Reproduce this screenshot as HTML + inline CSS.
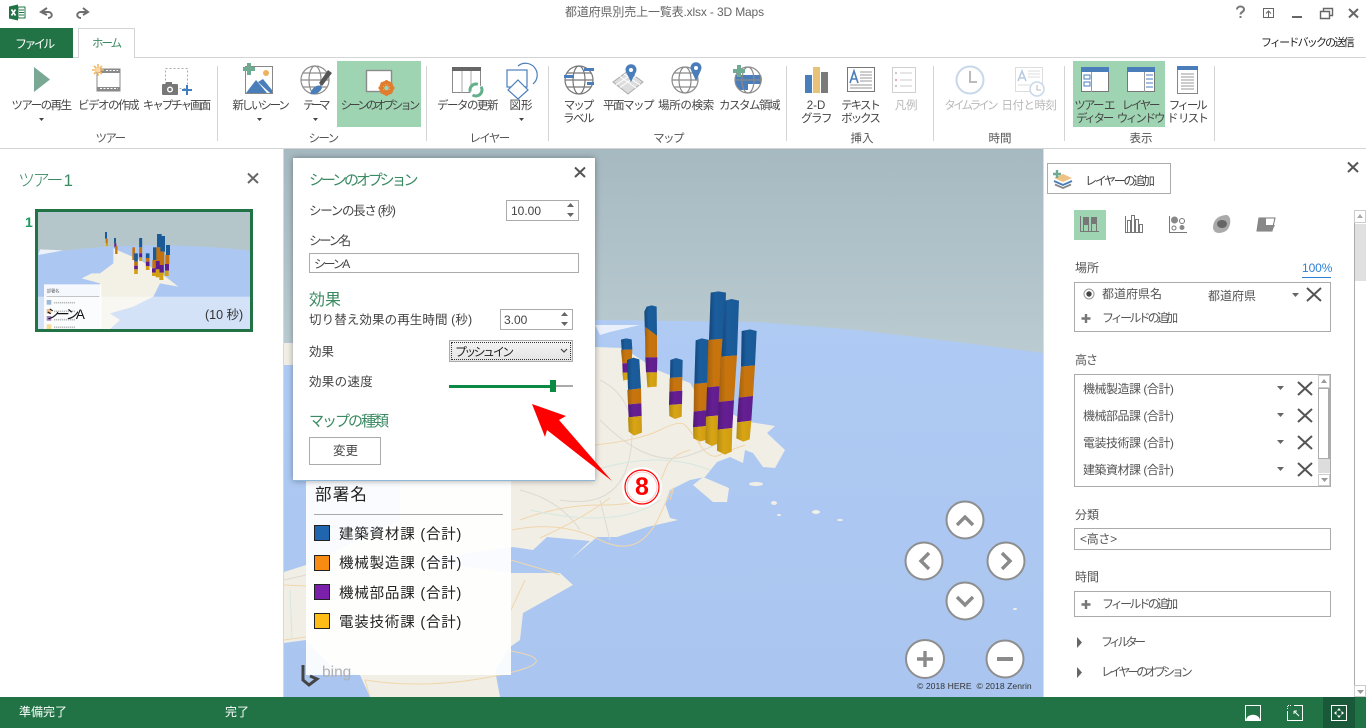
<!DOCTYPE html>
<html lang="ja">
<head>
<meta charset="utf-8">
<title>3D Maps</title>
<style>
html,body{margin:0;padding:0}
body{width:1366px;height:728px;overflow:hidden;position:relative;background:#fff;font-family:"Liberation Sans","Noto Sans CJK JP",sans-serif;color:#444}
.t{position:absolute;white-space:nowrap;line-height:1.2}
.r{font-size:11.5px;color:#444;width:120px;text-align:center;letter-spacing:-1.3px}
.g{font-size:11.5px;color:#555;width:80px;text-align:center;letter-spacing:-1px}
.dis{color:#b8b8b8}
.sep{position:absolute;top:66px;width:1px;height:75px;background:#d4d4d4}
.b{position:absolute;box-sizing:border-box;background:#fff;border:1px solid #ababab}
.hl{position:absolute;background:#9fd4b3}
.d{font-size:12.5px;color:#444;letter-spacing:-.6px}
.h{font-size:15px;color:#3a8a62;letter-spacing:-.6px}
.p{font-size:12px;color:#555;letter-spacing:-.5px}
.l{font-size:14.5px;color:#222;letter-spacing:.8px}
.sw{position:absolute;left:314px;width:16px;height:16px;box-sizing:border-box;border:1px solid #222}
svg{position:absolute;left:0;top:0}
</style>
</head>
<body>
<!-- MAP -->
<svg width="1366" height="728" viewBox="0 0 1366 728">
<defs>
<linearGradient id="sea" x1="0" y1="0" x2="0" y2="1"><stop offset="0" stop-color="#bcd8ff"/><stop offset=".3" stop-color="#afcbf4"/><stop offset="1" stop-color="#aac6f0"/></linearGradient>
<linearGradient id="sky" x1="0" y1="0" x2="0" y2="1"><stop offset="0" stop-color="#a6b9c1"/><stop offset="1" stop-color="#bacbd1"/></linearGradient>
<linearGradient id="bl" x1="0" y1="0" x2="1" y2="0"><stop offset="0" stop-color="#134679"/><stop offset=".35" stop-color="#1b5c9c"/><stop offset="1" stop-color="#1a5a97"/></linearGradient>
<linearGradient id="or" x1="0" y1="0" x2="1" y2="0"><stop offset="0" stop-color="#a4610f"/><stop offset=".4" stop-color="#c8750e"/><stop offset="1" stop-color="#c4720e"/></linearGradient>
<linearGradient id="pu" x1="0" y1="0" x2="1" y2="0"><stop offset="0" stop-color="#4e1a76"/><stop offset=".4" stop-color="#651f93"/><stop offset="1" stop-color="#5f1d8c"/></linearGradient>
<linearGradient id="ye" x1="0" y1="0" x2="1" y2="0"><stop offset="0" stop-color="#b48b12"/><stop offset=".45" stop-color="#d8a514"/><stop offset="1" stop-color="#cf9c12"/></linearGradient>
</defs>
<rect x="284" y="148" width="760" height="549" fill="url(#sea)"/>
<path d="M284 148H1043V353L957 342 857 330 757 322 595 320 284 343Z" fill="url(#sky)"/>
<rect x="283" y="148" width="1" height="549" fill="#d8d8d8"/>
<path d="M284 343H440V365H284Z" fill="#f1eee5"/>
<path d="M595 325L640 325 610 332 600 335Z" fill="#e9f0fb"/>
<path d="M595 347L623 348 657 370 690 383 700 400 750 422 775 426 767 433 785 450 775 468 763 467 753 453 745 450 743 463 730 457 717 462 705 477 690 480 670 490 665 503 670 518 678 520 647 527 617 537 597 537 570 560 590 541 547 537 533 550 513 547 420 560 511 573 560 573 573 585 523 613 520 640 510 647 495 670 500 697 370 697 360 675 330 665 306 640 284 643 284 572 306 565 400 520 400 400 480 340Z" fill="#f1eee5"/>
<path d="M693 485L703 477 729 488 727 502 713 502Z" fill="#f1eee5"/>
<g fill="#f1eee5"><ellipse cx="756" cy="484" rx="7" ry="2"/><ellipse cx="774" cy="503" rx="3" ry="2"/><ellipse cx="816" cy="512" rx="4" ry="2"/><ellipse cx="840" cy="520" rx="3" ry="1"/><ellipse cx="779" cy="515" rx="2" ry="1"/><ellipse cx="1015" cy="609" rx="2" ry="1"/></g>
<g fill="none" stroke="#f0d6ac" stroke-width="1">
<path d="M595 445Q640 440 660 430T685 425 700 445 720 455 745 445"/><path d="M520 520Q560 505 600 505T650 495 665 470 690 450"/>
<path d="M512 530Q560 520 600 540T660 515 670 500"/><path d="M284 585L306 586"/><path d="M284 640L306 637"/>
<path d="M511 560L545 570 560 575"/><path d="M540 538Q580 520 610 498"/><path d="M370 697L365 680Q430 690 500 675T505 650"/>
<path d="M700 400L695 420 700 445"/><path d="M511 610L525 580"/>
</g>
<g fill="none" stroke="#dcdad2" stroke-width="1">
<path d="M600 380Q640 400 630 455T560 500"/><path d="M600 420Q650 470 690 455T720 440"/><path d="M520 490Q560 500 580 530"/><path d="M600 500L610 540"/><path d="M284 580L306 575"/>
</g>
<g fill="none" stroke="#d6e8e0" stroke-width="1"><path d="M595 470Q660 450 710 470"/><path d="M530 510Q620 530 660 500"/><path d="M290 590L292 640"/></g>
<!-- bars -->
<g transform="translate(590 280) scale(.33333)">
<polygon fill="url(#bl)" points="93,179 108,175 125,178 127,208 95,210"/><polygon fill="url(#or)" points="93,210 127,208 125,248 97,250"/><polygon fill="url(#pu)" points="97,250 115,249 115,278 98,278"/><polygon fill="url(#ye)" points="97,278 115,278 115,298 100,302"/>
<polygon fill="url(#bl)" points="163,95 170,80 185,76 200,80 201,167 165,167"/><polygon fill="url(#or)" points="165,140 201,167 201,232 166,232"/><polygon fill="url(#pu)" points="166,232 202,232 201,277 168,277"/><polygon fill="url(#ye)" points="169,277 201,277 200,320 172,322"/>
<polygon fill="url(#bl)" points="111,240 130,233 148,238 153,325 114,330"/><polygon fill="url(#or)" points="112,330 153,325 154,370 114,373"/><polygon fill="url(#pu)" points="114,373 154,370 155,408 116,412"/><polygon fill="url(#ye)" points="114,412 155,408 156,458 132,467 116,455"/>
<polygon fill="url(#bl)" points="241,240 258,234 278,240 277,291 240,294"/><polygon fill="url(#or)" points="239,294 277,291 276,332 238,335"/><polygon fill="url(#pu)" points="238,335 277,332 276,372 237,375"/><polygon fill="url(#ye)" points="237,375 276,372 275,410 255,417 238,408"/>
<polygon fill="url(#bl)" points="317,181 335,175 358,180 355,308 313,312"/><polygon fill="url(#or)" points="312,312 355,308 352,390 311,395"/><polygon fill="url(#pu)" points="311,395 352,390 350,438 309,442"/><polygon fill="url(#ye)" points="309,442 350,438 348,480 330,484 310,475"/>
<polygon fill="url(#bl)" points="455,153 480,148 500,153 495,256 453,260"/><polygon fill="url(#or)" points="453,260 495,256 489,348 446,353"/><polygon fill="url(#pu)" points="446,353 489,348 484,422 441,427"/><polygon fill="url(#ye)" points="441,427 484,422 479,478 460,485 439,475"/>
<polygon fill="url(#bl)" points="362,38 385,34 408,38 404,176 357,180"/><polygon fill="url(#or)" points="355,180 404,176 394,318 351,322"/><polygon fill="url(#pu)" points="351,322 394,318 388,406 348,410"/><polygon fill="url(#ye)" points="348,410 388,406 385,490 365,498 346,488"/>
<polygon fill="url(#bl)" points="405,62 425,57 447,62 441,226 394,230"/><polygon fill="url(#or)" points="392,230 441,226 432,361 386,366"/><polygon fill="url(#pu)" points="386,366 432,361 427,444 383,449"/><polygon fill="url(#ye)" points="382,449 427,444 425,515 405,524 381,512"/>
</g>
</svg>

<!-- Legend -->
<div style="position:absolute;left:306px;top:481px;width:205px;height:194px;background:rgba(255,255,255,.92)"></div>
<div class="t" style="left:315px;top:486px;font-size:16.5px;color:#222;letter-spacing:1.2px">部署名</div>
<div style="position:absolute;left:314px;top:514px;width:189px;height:1px;background:#a8a8a8"></div>
<div class="sw" style="top:525px;background:#1f66ae"></div><div class="t l" style="left:339px;top:527px">建築資材課 (合計)</div>
<div class="sw" style="top:555px;background:#f88c12"></div><div class="t l" style="left:339px;top:556px">機械製造課 (合計)</div>
<div class="sw" style="top:584px;background:#7a20ab"></div><div class="t l" style="left:339px;top:586px">機械部品課 (合計)</div>
<div class="sw" style="top:613px;background:#fdbd16"></div><div class="t l" style="left:339px;top:615px">電装技術課 (合計)</div>
<svg width="1366" height="728"><path d="M303 665V680L309 685 317 679 310 676" fill="none" stroke="#444" stroke-width="3"/></svg>
<div class="t" style="left:322px;top:664px;font-size:15.500px;color:#b0b0b0">bing</div>

<!-- Nav -->
<svg width="1366" height="728">
<g fill="#fff" stroke="#8e8e8e" stroke-width="2"><circle cx="965" cy="520" r="18.5"/><circle cx="924" cy="561" r="18.5"/><circle cx="1006" cy="561" r="18.5"/><circle cx="965" cy="601" r="18.5"/><circle cx="925" cy="659" r="19"/><circle cx="1005" cy="659" r="18.5"/></g>
<g fill="none" stroke="#8a8a8a" stroke-width="3.4"><path d="M957 525L965 517 973 525"/><path d="M929 553L921 561 929 569"/><path d="M1002 553L1010 561 1002 569"/><path d="M957 597L965 605 973 597"/><path d="M917 659H933M925 651V667" /><path d="M997 659H1013" stroke-width="4"/></g>
</svg>
<div class="t" style="left:917px;top:681px;font-size:8.600px;color:#333;letter-spacing:.05px">© 2018 HERE&nbsp; © 2018 Zenrin</div>

<!-- Top bar -->
<div style="position:absolute;left:0;top:0;width:1366px;height:148px;background:#fff;border-bottom:1px solid #d4d4d4;box-sizing:content-box"></div>
<div style="position:absolute;left:0;top:57px;width:1366px;height:1px;background:#d4d4d4"></div>
<div style="position:absolute;left:0;top:28px;width:73px;height:30px;background:#217346"></div>
<div class="t" style="left:15px;top:37px;font-size:12px;color:#fff;letter-spacing:-2.600px">ファイル</div>
<div style="position:absolute;left:78px;top:28px;width:57px;height:30px;box-sizing:border-box;background:#fff;border:1px solid #d4d4d4;border-bottom:none"></div>
<div class="t" style="left:92px;top:38px;font-size:11.5px;color:#3f8a64;letter-spacing:-2px">ホーム</div>
<div class="t" style="left:565px;top:5px;font-size:12px;color:#666;letter-spacing:-.15px">都道府県別売上一覧表.xlsx - 3D Maps</div>
<div class="t" style="left:1261px;top:37px;font-size:11px;color:#222;letter-spacing:-1.800px">フィードバックの送信</div>

<div class="hl" style="left:337px;top:61px;width:84px;height:66px"></div>
<div class="hl" style="left:1073px;top:61px;width:92px;height:66px"></div>
<div class="sep" style="left:217px"></div><div class="sep" style="left:426px"></div><div class="sep" style="left:548px"></div><div class="sep" style="left:786px"></div><div class="sep" style="left:933px"></div><div class="sep" style="left:1064px"></div><div class="sep" style="left:1214px"></div>

<!-- Ribbon labels -->
<div class="t r" style="left:-19px;top:100px;letter-spacing:-1.5px">ツアーの再生</div>
<div class="t r" style="left:48px;top:100px;letter-spacing:-1.5px">ビデオの作成</div>
<div class="t r" style="left:116px;top:100px;letter-spacing:-2px">キャプチャ画面</div>
<div class="t r" style="left:200px;top:100px;letter-spacing:-2.2px">新しいシーン</div>
<div class="t r" style="left:255px;top:100px;letter-spacing:-3.5px">テーマ</div>
<div class="t r" style="left:319px;top:100px;letter-spacing:-2.9px">シーンのオプション</div>
<div class="t r" style="left:407px;top:100px;letter-spacing:-1.5px">データの更新</div>
<div class="t r" style="left:461px;top:100px;letter-spacing:0">図形</div>
<div class="t r" style="left:518px;top:100px;letter-spacing:-2px">マップ</div>
<div class="t r" style="left:518px;top:113px;letter-spacing:-1.5px">ラベル</div>
<div class="t r" style="left:568px;top:100px;letter-spacing:-1.5px">平面マップ</div>
<div class="t r" style="left:626px;top:100px;letter-spacing:-.3px">場所の検索</div>
<div class="t r" style="left:689px;top:100px;letter-spacing:-1.5px">カスタム領域</div>
<div class="t r" style="left:756px;top:100px;letter-spacing:0">2-D</div>
<div class="t r" style="left:756px;top:113px;letter-spacing:-1.5px">グラフ</div>
<div class="t r" style="left:800px;top:100px;letter-spacing:-2px">テキスト</div>
<div class="t r" style="left:800px;top:113px;letter-spacing:-2px">ボックス</div>
<div class="t r dis" style="left:846px;top:100px;letter-spacing:-.3px">凡例</div>
<div class="t r dis" style="left:910px;top:100px;letter-spacing:-2.8px">タイムライン</div>
<div class="t r dis" style="left:969px;top:100px;letter-spacing:-.5px">日付と時刻</div>
<div class="t r" style="left:1034px;top:100px;letter-spacing:-1.8px">ツアー エ</div>
<div class="t r" style="left:1034px;top:113px;letter-spacing:-2.3px">ディター</div>
<div class="t r" style="left:1080px;top:100px;letter-spacing:-2.3px">レイヤー</div>
<div class="t r" style="left:1080px;top:113px;letter-spacing:-2.2px">ウィンドウ</div>
<div class="t r" style="left:1127px;top:100px;letter-spacing:-2.3px">フィール</div>
<div class="t r" style="left:1127px;top:113px;letter-spacing:-1.8px">ド リスト</div>
<div class="t g" style="left:70px;top:133px;letter-spacing:-1.6px">ツアー</div>
<div class="t g" style="left:283px;top:133px;letter-spacing:-1.6px">シーン</div>
<div class="t g" style="left:449px;top:133px;letter-spacing:-1.6px">レイヤー</div>
<div class="t g" style="left:628px;top:133px;letter-spacing:-1.6px">マップ</div>
<div class="t g" style="left:822px;top:133px;letter-spacing:0">挿入</div>
<div class="t g" style="left:960px;top:133px;letter-spacing:0">時間</div>
<div class="t g" style="left:1101px;top:133px;letter-spacing:0">表示</div>

<!-- Ribbon + titlebar icons -->
<svg width="1366" height="728">
<path d="M9 6.5L18 4.5V20.5L9 18.5Z" fill="#1f7346"/><rect x="18" y="7" width="7" height="11" fill="#fff" stroke="#1f7346"/><path d="M19 10H24M19 12.5H24M19 15H24" stroke="#1f7346"/><path d="M11.5 9.5L15.5 15.5M15.5 9.5L11.5 15.5" stroke="#fff" stroke-width="1.6"/>
<path d="M47 8L41 12 47 15M42 12H48C53 12 53 18 48 18" fill="none" stroke="#6e6e6e" stroke-width="2"/>
<path d="M83 8L88 12 83 15M87 12H81C76 12 76 18 81 18" fill="none" stroke="#6e6e6e" stroke-width="2"/>
<path d="M1237 9.5C1237 5.5 1244 5.5 1244 9.5 1244 12 1240.500 12 1240.500 14.500" fill="none" stroke="#777" stroke-width="2"/><rect x="1239.500" y="16" width="2" height="2" fill="#777"/>
<rect x="1263.500" y="8.500" width="10" height="9" fill="none" stroke="#666"/><path d="M1263 8.500H1274M1268.500 17V11.500M1266 13.500L1268.500 11 1271 13.500" fill="none" stroke="#666"/>
<rect x="1292" y="16" width="10" height="2" fill="#666"/>
<path d="M1320.500 11.500H1329.500V18.500H1320.500ZM1323.500 11V8.500H1332.500V15.500H1330" fill="none" stroke="#666" stroke-width="1.4"/>
<path d="M1349 9L1358 17.500M1358 9L1349 17.500" stroke="#666" stroke-width="2"/>
<polygon points="34,67 34,92 50,79.500" fill="#79a895"/>
<g fill="#444"><path d="M39 118H44L41.500 121Z"/><path d="M257 118H262L259.500 121Z"/><path d="M313 118H318L315.500 121Z"/><path d="M519 118H524L521.500 121Z" /></g>
<rect x="97" y="69" width="23" height="22" fill="#fff" stroke="#8a8a8a"/><rect x="97" y="69" width="23" height="4" fill="#8a8a8a"/><rect x="97" y="87" width="23" height="4" fill="#8a8a8a"/>
<path d="M100 88.500H118M106 70.500H118" stroke="#fff" stroke-dasharray="2 1.500"/>
<path d="M98 64V76M92 70H104M94 66L102 74M102 66L94 74" stroke="#f3b863" stroke-width="1.6"/><circle cx="98" cy="70" r="2.500" fill="#fad79f"/>
<rect x="165.500" y="68.500" width="22" height="20" fill="none" stroke="#aaa" stroke-dasharray="2 2"/>
<rect x="162" y="84" width="16" height="11" rx="1" fill="#777"/><rect x="166" y="82" width="6" height="3" fill="#777"/><circle cx="170" cy="89.500" r="3" fill="#fff"/><circle cx="170" cy="89.500" r="1.600" fill="#777"/>
<path d="M187 85V95M182 90H192" stroke="#3f7fc1" stroke-width="2"/>
<rect x="245.500" y="66.500" width="27" height="27" fill="#fff" stroke="#888"/><circle cx="266" cy="73" r="3" fill="#eeb25f"/>
<path d="M246 93L256 80 267 93ZM258 82L263 79 272 90V93H270Z" fill="#4a7ebb"/>
<rect x="243" y="67" width="12" height="4" fill="#6faa92"/><rect x="247" y="63" width="4" height="12" fill="#6faa92"/>
<g fill="none" stroke="#8c8c8c" stroke-width="1.2"><circle cx="315" cy="80" r="14"/><ellipse cx="315" cy="80" rx="6" ry="14"/><path d="M301 80H329M303 73H327M303 87H327"/></g>
<path d="M322 86L332 73 328 70 319 83Z" fill="#555"/><path d="M310 94C313 85 320 84 322 87 322 91 316 95 310 94Z" fill="#4a7ebb"/>
<rect x="366.500" y="70.500" width="25" height="21" fill="#fff" stroke="#8a8a8a" stroke-width="1.4"/>
<circle cx="386.500" cy="88" r="5.500" fill="none" stroke="#e07d2e" stroke-width="3.500"/>
<path d="M386.500 80V96M378.500 88H394.500M381 82.500L392 93.500M392 82.500L381 93.500" stroke="#e07d2e" stroke-width="2.200"/><circle cx="386.500" cy="88" r="2.300" fill="#9fd4b3"/>
<rect x="452.500" y="67.500" width="28" height="25" fill="#fff" stroke="#8a8a8a"/><rect x="452" y="67" width="29" height="4" fill="#666"/><path d="M462 71V93M471 71V93" stroke="#aaa"/>
<circle cx="476" cy="90" r="6" fill="#fff" stroke="#62b08c" stroke-width="3" stroke-dasharray="13 4"/>
<g fill="none" stroke="#4a7ebb" stroke-width="1.200"><rect x="507" y="70" width="20" height="17" fill="#fff"/><path d="M518 66A10 10 0 1 1 533 84"/><path d="M518 80L528 90 518 99 508 90Z" fill="#fff"/></g>
<g fill="none" stroke="#777" stroke-width="1.200"><circle cx="579" cy="80" r="14"/><ellipse cx="579" cy="80" rx="6" ry="14"/><path d="M565 80H593M567 73H591M567 87H591"/></g>
<rect x="564" y="75" width="10" height="3" fill="#4a7ebb"/><rect x="584" y="68" width="10" height="3" fill="#4a7ebb"/><rect x="587" y="82" width="7" height="3" fill="#4a7ebb"/>
<path d="M613 82L628 71 643 82 628 94Z" fill="#ddd" stroke="#aaa"/><path d="M620 76.500L636 88M620 87.500L636 76M624 74L640 85M616 85L632 74" stroke="#fff"/>
<path d="M631 82L626 72A5.500 5.500 0 1 1 636 72Z" fill="#4a7ebb"/><circle cx="631" cy="70" r="2" fill="#fff"/>
<g fill="none" stroke="#8a8a8a" stroke-width="1.200"><circle cx="685" cy="80" r="13"/><ellipse cx="685" cy="80" rx="6" ry="13"/><path d="M672 80H698M674 73H696M674 87H696"/></g>
<path d="M696 81L691 70A5.500 5.500 0 1 1 701 70Z" fill="#4a7ebb"/><circle cx="696" cy="68" r="2" fill="#fff"/>
<path d="M736 75H761A13 13 0 0 1 761 84H748V90H740A13 13 0 0 1 736 75Z" fill="#4a7ebb"/>
<g fill="none" stroke="#8a8a8a" stroke-width="1.200"><circle cx="748" cy="80" r="13"/><ellipse cx="748" cy="80" rx="6" ry="13"/><path d="M735 80H761"/></g>
<rect x="733" y="69" width="12" height="4" fill="#6faa92"/><rect x="737" y="65" width="4" height="12" fill="#6faa92"/>
<rect x="805" y="75" width="7" height="18" fill="#4a7ebb"/><rect x="813" y="67" width="7" height="26" fill="#e8c278"/><rect x="821" y="72" width="7" height="21" fill="#7a7a7a"/>
<rect x="847.500" y="67.500" width="27" height="24" fill="#fff" stroke="#777"/>
<path d="M850 83L854 71 858 83M851.500 79H856.500" fill="none" stroke="#4a7ebb" stroke-width="1.600"/><path d="M860 72H872M860 75H872M860 78H872M860 81H872M850 85H872M850 88H872" stroke="#999"/>
<rect x="892.500" y="67.500" width="23" height="25" fill="#fff" stroke="#cfcfcf"/><circle cx="896" cy="73" r="1.200" fill="#ccc"/><circle cx="896" cy="80" r="1.200" fill="#eab"/><circle cx="896" cy="86" r="1.200" fill="#ccc"/><path d="M900 73H912M900 80H912M900 86H912" stroke="#ccc"/>
<circle cx="970" cy="80" r="13.500" fill="#fff" stroke="#c8d8ea" stroke-width="2"/><path d="M970 71V82H977" fill="none" stroke="#bbb" stroke-width="2"/>
<rect x="1015.500" y="67.500" width="27" height="24" fill="#fff" stroke="#ddd"/><path d="M1018 81L1022 71 1026 81M1019.500 78H1024.500" fill="none" stroke="#b8cbe2" stroke-width="1.600"/><path d="M1028 71H1040M1028 74H1040M1028 77H1040M1018 85H1030" stroke="#ddd"/>
<circle cx="1037" cy="89" r="7" fill="#fff" stroke="#c8d8ea" stroke-width="1.500"/><path d="M1037 85V90H1041" fill="none" stroke="#bbb"/>
<rect x="1081.500" y="67.500" width="27" height="24" fill="#fff" stroke="#777"/><rect x="1081" y="67" width="28" height="5" fill="#4a7ebb"/><path d="M1091.500 72V92" stroke="#999"/><rect x="1084" y="75" width="6" height="4" fill="none" stroke="#4a7ebb"/><rect x="1084" y="82" width="6" height="4" fill="none" stroke="#4a7ebb"/>
<rect x="1127.500" y="67.500" width="27" height="24" fill="#fff" stroke="#777"/><rect x="1127" y="67" width="28" height="5" fill="#4a7ebb"/><path d="M1144.500 72V92" stroke="#999"/><path d="M1146 75H1153M1146 79H1153M1146 83H1153M1146 87H1153" stroke="#4a7ebb"/>
<rect x="1177.500" y="66.500" width="20" height="27" fill="#fff" stroke="#888"/><rect x="1177" y="66" width="21" height="4" fill="#4a7ebb"/><path d="M1181 74H1194M1181 77H1194M1181 80H1194M1181 83H1194M1181 86H1194M1181 89H1194" stroke="#999"/>
</svg>

<!-- Left panel -->
<div style="position:absolute;left:0;top:149px;width:283px;height:548px;background:#fff"></div>
<div class="t" style="left:18px;top:171px;font-size:17px;color:#3a8a62;letter-spacing:-2.300px;font-weight:300">ツアー 1</div>
<div class="t" style="left:25px;top:214px;font-size:14px;color:#1a9a5e;font-weight:bold">1</div>
<svg width="1366" height="728">
<path d="M248 173.500L258 183M258 173.500L248 183" stroke="#666" stroke-width="2"/>
<rect x="36.500" y="210.500" width="215" height="120" fill="#abc7f0" stroke="#217346" stroke-width="3"/>
<g transform="translate(0 150) scale(.33333)">
<rect x="114" y="187" width="636" height="115" fill="#b5c6ca"/>
<path d="M114 312Q430 265 750 302V440H114Z" fill="#acc8f2"/>
<path d="M115 315L190 301 120 298Z" fill="#eef2f8"/>
<path d="M340 295L420 330 490 375 535 410 480 400 460 440 400 470 330 490 360 510 330 537H300V400L245 385 275 370 300 370 340 340Z" fill="#f3f0e6"/>
<rect x="114" y="440" width="636" height="97" fill="#fff" opacity=".48"/>
<rect x="132" y="403" width="172" height="134" fill="#fff" opacity=".88"/>
<rect x="140" y="438" width="158" height="2" fill="#aaa"/>
<text x="140" y="428" font-size="13" fill="#666">部署名</text>
<rect x="140" y="450" width="14" height="14" fill="#9db9d8"/><rect x="140" y="477" width="14" height="14" fill="#efc08f"/><rect x="140" y="498" width="14" height="14" fill="#a583c0"/><rect x="140" y="523" width="14" height="14" fill="#f6dc94"/>
<path d="M162 458H225M162 484H225M162 509H225M162 532H225" stroke="#bbb" stroke-width="5" stroke-dasharray="4 2"/>
<g stroke-width="8" fill="none">
<path d="M318 246V266" stroke="#1a5a97" stroke-width="6"/><path d="M320 266V280" stroke="#c4720e" stroke-width="6"/><path d="M321 280V288" stroke="#d3a013" stroke-width="6"/>
<path d="M345 264V280" stroke="#1a5a97" stroke-width="6"/><path d="M346 280V292" stroke="#5f1d8c" stroke-width="6"/><path d="M349 288V312" stroke="#c4720e" stroke-width="7"/>
<path d="M401 292V330" stroke="#c4720e" stroke-width="8"/><path d="M408 310V335" stroke="#1a5a97" stroke-width="11"/><path d="M408 335V347" stroke="#c4720e" stroke-width="11"/><path d="M408 347V358" stroke="#5f1d8c" stroke-width="11"/><path d="M408 358V372" stroke="#d3a013" stroke-width="11"/>
<path d="M422 264V292" stroke="#1a5a97" stroke-width="9"/><path d="M422 292V310" stroke="#c4720e" stroke-width="9"/><path d="M422 310V322" stroke="#5f1d8c" stroke-width="9"/><path d="M422 322V333" stroke="#d3a013" stroke-width="9"/>
<path d="M443 310V324" stroke="#1a5a97" stroke-width="11"/><path d="M443 324V335" stroke="#c4720e" stroke-width="11"/><path d="M443 335V348" stroke="#5f1d8c" stroke-width="11"/><path d="M443 348V360" stroke="#d3a013" stroke-width="11"/>
<path d="M465 292V330" stroke="#1a5a97" stroke-width="12"/><path d="M463 330V355" stroke="#c4720e" stroke-width="12"/><path d="M462 355V368" stroke="#5f1d8c" stroke-width="12"/><path d="M462 368V378" stroke="#d3a013" stroke-width="12"/>
<path d="M478 252V292" stroke="#1a5a97" stroke-width="14"/><path d="M476 292V333" stroke="#c4720e" stroke-width="14"/><path d="M474 333V358" stroke="#5f1d8c" stroke-width="13"/><path d="M473 358V382" stroke="#d3a013" stroke-width="12"/>
<path d="M488 258V305" stroke="#1a5a97" stroke-width="14"/><path d="M486 305V345" stroke="#c4720e" stroke-width="14"/><path d="M485 345V368" stroke="#5f1d8c" stroke-width="13"/><path d="M484 368V390" stroke="#d3a013" stroke-width="12"/>
<path d="M504 285V315" stroke="#1a5a97" stroke-width="12"/><path d="M502 315V342" stroke="#c4720e" stroke-width="12"/><path d="M501 342V362" stroke="#5f1d8c" stroke-width="12"/><path d="M500 362V378" stroke="#d3a013" stroke-width="12"/>
</g>
</g>
</svg>
<div class="t" style="left:46px;top:307px;font-size:13.500px;color:#111;letter-spacing:-3.300px">シーンA</div>
<div class="t" style="left:205px;top:308px;font-size:12.500px;color:#333">(10 秒)</div>

<!-- Dialog -->
<div style="position:absolute;left:293px;top:158px;width:302px;height:323px;background:#fff;box-shadow:0 0 6px rgba(0,0,0,.35);border-bottom:1px solid #8fb8d8;box-sizing:border-box"></div>
<div class="t h" style="left:309px;top:172px;letter-spacing:-3.100px;font-size:15px">シーンのオプション</div>
<div class="t d" style="left:309px;top:204px;letter-spacing:-1.300px">シーンの長さ (秒)</div>
<div class="b" style="left:506px;top:200px;width:73px;height:21px"></div>
<div class="t d" style="left:511px;top:204px;letter-spacing:0;font-size:12px">10.00</div>
<div class="t d" style="left:309px;top:234px;letter-spacing:-2.400px">シーン名</div>
<div class="b" style="left:309px;top:253px;width:270px;height:20px"></div>
<div class="t d" style="left:314px;top:257px;letter-spacing:-2.400px;font-size:12px">シーンA</div>
<div class="t h" style="left:309px;top:291px;font-size:16px;letter-spacing:0">効果</div>
<div class="t d" style="left:309px;top:313px;letter-spacing:.1px;font-size:12.500px">切り替え効果の再生時間 (秒)</div>
<div class="b" style="left:500px;top:309px;width:73px;height:21px"></div>
<div class="t d" style="left:504px;top:313px;letter-spacing:0;font-size:12px">3.00</div>
<div class="t d" style="left:309px;top:345px;letter-spacing:0">効果</div>
<div class="b" style="left:449px;top:340px;width:124px;height:22px;background:linear-gradient(#f4f4f4,#e4e4e4)"></div>
<div style="position:absolute;left:451px;top:342px;width:120px;height:18px;box-sizing:border-box;border:1px dotted #333"></div>
<div class="t" style="left:455px;top:345px;font-size:12px;color:#222;letter-spacing:-2.700px">プッシュ イン</div>
<div class="t d" style="left:309px;top:375px;letter-spacing:.3px">効果の速度</div>
<div style="position:absolute;left:556px;top:385px;width:17px;height:2px;background:#aaa"></div>
<div style="position:absolute;left:449px;top:385px;width:102px;height:3px;background:#0c8a44"></div>
<div style="position:absolute;left:550px;top:380px;width:6px;height:12px;background:#0c8a44"></div>
<div class="t h" style="left:309px;top:413px;letter-spacing:-2px">マップの種類</div>
<div class="b" style="left:309px;top:437px;width:72px;height:28px"></div>
<div class="t d" style="left:333px;top:444px;letter-spacing:0">変更</div>
<svg width="1366" height="728">
<path d="M575 167.500L585 177M585 167.500L575 177" stroke="#555" stroke-width="2"/>
<g fill="#666"><path d="M567 207L570.500 203 574 207Z"/><path d="M567 213L570.500 217 574 213Z"/><path d="M561 316L564.500 312 568 316Z"/><path d="M561 322L564.500 326 568 322Z"/></g>
<path d="M561 349L564 352 567 349" fill="none" stroke="#444" stroke-width="1.200"/>
</svg>

<!-- red arrow + badge on top of dialog -->
<svg width="1366" height="728">
<polygon fill="#ff0000" points="532,404 566,416 559,420 612,481 547,430 545,437"/>
<circle cx="642" cy="487" r="20" fill="#fff"/><circle cx="642" cy="487" r="17" fill="#fff" stroke="#f00" stroke-width="1.200"/><circle cx="642" cy="487" r="15" fill="none" stroke="#f8c8c8" stroke-width="1"/>
</svg>
<div class="t" style="left:622px;top:472px;width:40px;text-align:center;font-size:25px;line-height:30px;font-weight:bold;color:#f00">8</div>

<!-- Right panel -->
<div style="position:absolute;left:1043px;top:149px;width:323px;height:548px;background:#fff;border-left:1px solid #ddd;box-sizing:border-box"></div>
<div class="b" style="left:1047px;top:163px;width:124px;height:31px"></div>
<div class="t p" style="left:1085px;top:174px;letter-spacing:-2.300px;color:#444">レイヤーの追加</div>
<div class="hl" style="left:1074px;top:210px;width:32px;height:30px"></div>
<div class="t p" style="left:1075px;top:261px;letter-spacing:0">場所</div>
<div class="t" style="left:1302px;top:261px;font-size:12px;color:#2f80d5;letter-spacing:-.1px">100%</div>
<div style="position:absolute;left:1302px;top:277px;width:29px;height:1px;background:#2f80d5"></div>
<div class="b" style="left:1074px;top:282px;width:257px;height:50px"></div>
<div class="t p" style="left:1102px;top:287px;letter-spacing:0">都道府県名</div>
<div class="t p" style="left:1208px;top:289px;letter-spacing:0">都道府県</div>
<div class="t p" style="left:1102px;top:311px;letter-spacing:-2.800px">フィールドの追加</div>
<div class="t p" style="left:1075px;top:353px;letter-spacing:-1px">高さ</div>
<div class="b" style="left:1074px;top:374px;width:257px;height:113px"></div>
<div class="t p" style="left:1083px;top:382px">機械製造課 (合計)</div>
<div class="t p" style="left:1083px;top:409px">機械部品課 (合計)</div>
<div class="t p" style="left:1083px;top:436px">電装技術課 (合計)</div>
<div class="t p" style="left:1083px;top:463px">建築資材課 (合計)</div>
<div class="t p" style="left:1075px;top:508px;letter-spacing:0">分類</div>
<div class="b" style="left:1074px;top:528px;width:257px;height:22px"></div>
<div class="t p" style="left:1080px;top:532px;letter-spacing:-.3px">&lt;高さ&gt;</div>
<div class="t p" style="left:1075px;top:570px;letter-spacing:0">時間</div>
<div class="b" style="left:1074px;top:591px;width:257px;height:26px"></div>
<div class="t p" style="left:1102px;top:597px;letter-spacing:-2.800px">フィールドの追加</div>
<div class="t p" style="left:1101px;top:635px;letter-spacing:-3.700px">フィルター</div>
<div class="t p" style="left:1101px;top:665px;letter-spacing:-3.100px">レイヤーのオプション</div>
<div style="position:absolute;left:1354px;top:210px;width:12px;height:487px;box-sizing:border-box;border-left:1px solid #ababab"></div>
<div style="position:absolute;left:1355px;top:224px;width:11px;height:57px;background:#e0e0e0"></div>
<div style="position:absolute;left:1318px;top:388px;width:12px;height:71px;box-sizing:border-box;border:1px solid #ababab;border-right:2px solid #ababab"></div>
<div style="position:absolute;left:1318px;top:459px;width:12px;height:14px;background:#ddd"></div>
<svg width="1366" height="728">
<path d="M1348 162.500L1358 172M1358 162.500L1348 172" stroke="#555" stroke-width="2"/>
<path d="M1054 178L1063 174 1072 178 1063 182Z" fill="#edc284"/><path d="M1054 181L1063 185 1072 181" fill="none" stroke="#4a7ebb" stroke-width="1.800"/><path d="M1055 184.500L1063 188 1071 184.500" fill="none" stroke="#888" stroke-width="1.800"/>
<path d="M1057 170V178M1053 174H1061" stroke="#6faa92" stroke-width="2.400"/>
<g fill="none" stroke="#777"><path d="M1080.500 216V231.500H1099"/><rect x="1083.500" y="217.500" width="5" height="14"/><rect x="1091.500" y="217.500" width="5" height="14"/></g><rect x="1084" y="218" width="4" height="7" fill="#777"/><rect x="1092" y="218" width="4" height="6" fill="#777"/>
<g fill="none" stroke="#777"><path d="M1125.500 216V232.500H1143"/><rect x="1127.500" y="220.500" width="3" height="12"/><rect x="1131.500" y="215.500" width="3" height="17"/><rect x="1135.500" y="219.500" width="3" height="13"/><rect x="1139.500" y="224.500" width="3" height="8"/></g>
<path d="M1169.500 216V232.500H1187" fill="none" stroke="#777"/><circle cx="1174.500" cy="220" r="3.500" fill="#888"/><circle cx="1182" cy="221" r="2.500" fill="none" stroke="#777"/><circle cx="1174" cy="228" r="2" fill="none" stroke="#777"/><circle cx="1182" cy="227.500" r="2.500" fill="#888"/>
<path d="M1213 228C1213 218 1221 215 1227 215 1232 217 1231 227 1226 231 1220 234 1214 234 1213 228Z" fill="#aaa"/><ellipse cx="1222" cy="224" rx="5" ry="4" fill="#666"/>
<path d="M1259 218H1275L1272 231H1257Z" fill="#fff" stroke="#777"/><path d="M1259 218H1266V225H1275L1272 231H1257Z" fill="#888"/>
<circle cx="1089" cy="294" r="5" fill="#fff" stroke="#999"/><circle cx="1089" cy="294" r="2.700" fill="#444"/>
<g fill="#666"><path d="M1292 293H1299L1295.500 297Z"/><path d="M1277 386H1284L1280.500 390Z"/><path d="M1277 413H1284L1280.500 417Z"/><path d="M1277 440H1284L1280.500 444Z"/><path d="M1277 467H1284L1280.500 471Z"/>
<path d="M1077 637V648L1082 642.500Z"/><path d="M1077 667V678L1082 672.500Z"/>
<path d="M1357 218L1360 214 1363 218Z" fill="#aaa"/><path d="M1357 690H1364L1360.500 694Z" fill="#999"/>
<path d="M1321 383L1324 379 1327 383Z" fill="#999"/><path d="M1321 478H1328L1324.500 482Z" fill="#999"/></g>
<rect x="1354.500" y="210.500" width="11" height="12" fill="none" stroke="#ccc"/><rect x="1354.500" y="685.500" width="11" height="11" fill="none" stroke="#ccc"/>
<rect x="1318.500" y="375.500" width="11" height="12" fill="none" stroke="#ccc"/><rect x="1318.500" y="474.500" width="11" height="11" fill="none" stroke="#ccc"/>
<g stroke="#555" stroke-width="2"><path d="M1307 288L1321 301M1321 288L1307 301"/><path d="M1298 382L1312 395M1312 382L1298 395"/><path d="M1298 409L1312 422M1312 409L1298 422"/><path d="M1298 436L1312 449M1312 436L1298 449"/><path d="M1298 463L1312 476M1312 463L1298 476"/></g>
<path d="M1086 314V323M1081.500 318.500H1090.500M1086 600V609M1081.500 604.500H1090.500" stroke="#777" stroke-width="2.400"/>
</svg>

<!-- Status bar -->
<div style="position:absolute;left:0;top:697px;width:1366px;height:31px;background:#217346"></div>
<div style="position:absolute;left:1323px;top:697px;width:32px;height:31px;background:#19593a"></div>
<div class="t" style="left:19px;top:705px;font-size:12px;color:#fff">準備完了</div>
<div class="t" style="left:225px;top:705px;font-size:12px;color:#fff">完了</div>
<svg width="1366" height="728">
<rect x="1245.500" y="705.500" width="15" height="15" fill="none" stroke="#fff"/><path d="M1246 720C1247 713 1259 713 1260 720Z" fill="#fff"/>
<path d="M1294 705.500H1302.500V720.500H1287.500V711" fill="none" stroke="#fff"/><path d="M1287.500 709V705.500H1292" fill="none" stroke="#fff" stroke-dasharray="1 1"/>
<path d="M1294 711L1299 716M1294 711H1297M1294 711V714" stroke="#fff" fill="none"/>
<rect x="1331.500" y="705.500" width="15" height="15" fill="none" stroke="#fff"/><path d="M1339 708L1341 710.500H1337ZM1339 718L1341 715.500H1337ZM1334 713L1336.500 711V715ZM1344 713L1341.500 711V715Z" fill="#fff"/>
</svg>
</body>
</html>
